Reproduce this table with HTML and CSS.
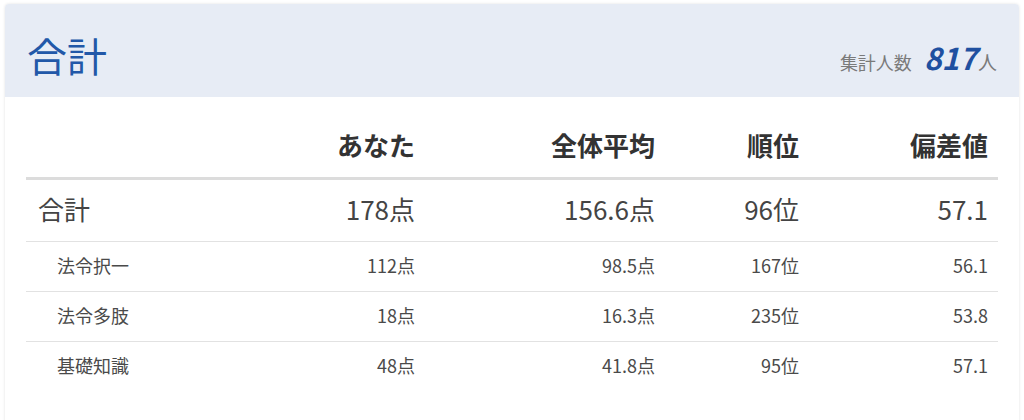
FILE: index.html
```html
<!DOCTYPE html>
<html lang="ja">
<head>
<meta charset="utf-8">
<link rel="stylesheet" href="styles.css">
</head>
<body>
<section class="card">
  <header class="card-head">
    <h1 class="title">合計</h1>
    <div class="count"><span class="count-label">集計人数</span><span class="count-num">817</span><span class="count-unit">人</span></div>
  </header>
  <div class="card-body">
    <table class="scores">
      <colgroup>
        <col class="c-label"><col class="c-you"><col class="c-avg"><col class="c-rank"><col class="c-dev">
      </colgroup>
      <thead>
        <tr><th></th><th>あなた</th><th>全体平均</th><th>順位</th><th>偏差値</th></tr>
      </thead>
      <tbody>
        <tr class="total"><td class="label">合計</td><td>178点</td><td>156.6点</td><td>96位</td><td>57.1</td></tr>
        <tr class="sub"><td class="label">法令択一</td><td>112点</td><td>98.5点</td><td>167位</td><td>56.1</td></tr>
        <tr class="sub"><td class="label">法令多肢</td><td>18点</td><td>16.3点</td><td>235位</td><td>53.8</td></tr>
        <tr class="sub last"><td class="label">基礎知識</td><td>48点</td><td>41.8点</td><td>95位</td><td>57.1</td></tr>
      </tbody>
    </table>
  </div>
</section>
</body>
</html>
```
FILE: styles.css
```css
html, body {
  margin: 0;
  background: #ffffff;
}
body {
  padding: 4px 5px 0 5px;
  font-family: "Noto Sans CJK JP", "Noto Sans", sans-serif;
  color: #444;
}
.card {
  background: #fff;
  border-radius: 4px;
  box-shadow: 0 0 3px rgba(0, 0, 0, 0.12);
  overflow: hidden;
  min-height: 430px;
}
.card-head {
  height: 93px;
  box-sizing: border-box;
  background: #e7ecf5;
  display: flex;
  justify-content: space-between;
  align-items: center;
  padding: 0 22px 0 22px;
}
.title {
  margin: 8px 0 0 0;
  font-size: 40px;
  font-weight: 400;
  line-height: 1;
  color: #2258a8;
}
.count {
  margin-top: 12px;
  display: flex;
  align-items: baseline;
  color: #7a7a7a;
}
.count-label {
  font-size: 18px;
}
.count-num {
  font-size: 30px;
  font-weight: 700;
  font-style: italic;
  color: #1f50a0;
  margin-left: 12px;
  margin-right: 1px;
}
.count-unit {
  font-size: 19px;
}
.card-body {
  padding: 21px 21px 0 21px;
}
.scores {
  width: 100%;
  border-collapse: collapse;
  table-layout: fixed;
}
.c-label { width: 250px; }
.c-you { width: 149px; }
.c-avg { width: 240px; }
.c-rank { width: 144px; }
.c-dev { width: 189px; }
.scores th {
  height: 60px;
  box-sizing: border-box;
  padding: 0 10px 6px 10px;
  text-align: right;
  font-size: 26px;
  font-weight: 700;
  color: #333;
  border-bottom: 3px solid #dcdcdc;
  vertical-align: middle;
}
.scores td {
  padding: 0 10px;
  text-align: right;
  vertical-align: middle;
  border-bottom: 1px solid #e2e2e2;
}
.scores td.label {
  text-align: left;
}
.total td {
  height: 57px;
  padding-bottom: 4px;
  font-size: 26px;
}
.total td.label {
  padding-left: 12px;
}
.sub td {
  height: 46px;
  padding-bottom: 3px;
  font-size: 18px;
  color: #4a4a4a;
}
.sub td.label {
  padding-left: 31px;
}
.sub.last td {
  border-bottom: none;
}
```
